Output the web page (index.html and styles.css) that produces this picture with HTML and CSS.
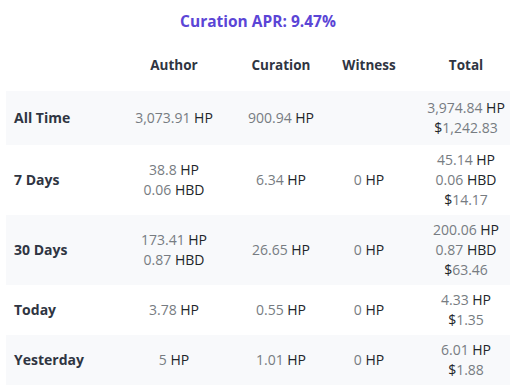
FILE: index.html
```html
<!DOCTYPE html>
<html>
<head>
<meta charset="utf-8">
<link rel="stylesheet" href="styles.css">
</head>
<body>
<div class="wrap">
  <h1 class="title">Curation APR: 9.47%</h1>
  <div class="table">
    <div class="row head">
      <div class="c label"></div>
      <div class="c author">Author</div>
      <div class="c curation">Curation</div>
      <div class="c witness">Witness</div>
      <div class="c total">Total</div>
    </div>
    <div class="row alt first">
      <div class="c label">All Time</div>
      <div class="c author"><span class="n">3,073.91</span> <span class="u">HP</span></div>
      <div class="c curation"><span class="n">900.94</span> <span class="u">HP</span></div>
      <div class="c witness"></div>
      <div class="c total"><div><span class="n">3,974.84</span> <span class="u">HP</span></div><div><span class="u">$</span><span class="n">1,242.83</span></div></div>
    </div>
    <div class="row">
      <div class="c label">7 Days</div>
      <div class="c author"><div><span class="n">38.8</span> <span class="u">HP</span></div><div><span class="n">0.06</span> <span class="u">HBD</span></div></div>
      <div class="c curation"><span class="n">6.34</span> <span class="u">HP</span></div>
      <div class="c witness"><span class="n">0</span> <span class="u">HP</span></div>
      <div class="c total"><div><span class="n">45.14</span> <span class="u">HP</span></div><div><span class="n">0.06</span> <span class="u">HBD</span></div><div><span class="u">$</span><span class="n">14.17</span></div></div>
    </div>
    <div class="row alt">
      <div class="c label">30 Days</div>
      <div class="c author"><div><span class="n">173.41</span> <span class="u">HP</span></div><div><span class="n">0.87</span> <span class="u">HBD</span></div></div>
      <div class="c curation"><span class="n">26.65</span> <span class="u">HP</span></div>
      <div class="c witness"><span class="n">0</span> <span class="u">HP</span></div>
      <div class="c total"><div><span class="n">200.06</span> <span class="u">HP</span></div><div><span class="n">0.87</span> <span class="u">HBD</span></div><div><span class="u">$</span><span class="n">63.46</span></div></div>
    </div>
    <div class="row">
      <div class="c label">Today</div>
      <div class="c author"><span class="n">3.78</span> <span class="u">HP</span></div>
      <div class="c curation"><span class="n">0.55</span> <span class="u">HP</span></div>
      <div class="c witness"><span class="n">0</span> <span class="u">HP</span></div>
      <div class="c total"><div><span class="n">4.33</span> <span class="u">HP</span></div><div><span class="u">$</span><span class="n">1.35</span></div></div>
    </div>
    <div class="row alt">
      <div class="c label">Yesterday</div>
      <div class="c author"><span class="n">5</span> <span class="u">HP</span></div>
      <div class="c curation"><span class="n">1.01</span> <span class="u">HP</span></div>
      <div class="c witness"><span class="n">0</span> <span class="u">HP</span></div>
      <div class="c total"><div><span class="n">6.01</span> <span class="u">HP</span></div><div><span class="u">$</span><span class="n">1.88</span></div></div>
    </div>
  </div>
</div>
</body>
</html>
```

FILE: styles.css
```css
html, body {
  margin: 0;
  padding: 0;
  background: #ffffff;
}
body {
  font-family: "Open Sans", "Noto Sans", sans-serif;
  font-size: 14px;
  color: #212529;
}
.wrap {
  padding: 8px 3px 0 6px;
}
.title {
  margin: 0;
  text-align: center;
  font-size: 15.5px;
  font-weight: 700;
  line-height: 26px;
  color: #5b45d6;
}
.table {
  margin-top: 21px;
  display: flex;
  flex-direction: column;
}
.row {
  display: grid;
  grid-template-columns: 110px 116px 98px 78px 102px;
  align-items: center;
  padding: 5px 0;
  line-height: 20px;
}
.row.head {
  padding: 0 0 16px;
  font-size: 13.5px;
}
.row.first {
  padding: 7px 0;
}
.row.alt {
  background: #f8f9fb;
}
.head .c {
  font-weight: 700;
  color: #2f3542;
}
.c {
  text-align: center;
}
.c.label {
  text-align: left;
  padding-left: 8px;
  font-weight: 700;
  color: #2f3542;
}
.c.total {
  padding-left: 14px;
}
.n {
  color: #777c82;
}
.u {
  color: #212529;
}
```
